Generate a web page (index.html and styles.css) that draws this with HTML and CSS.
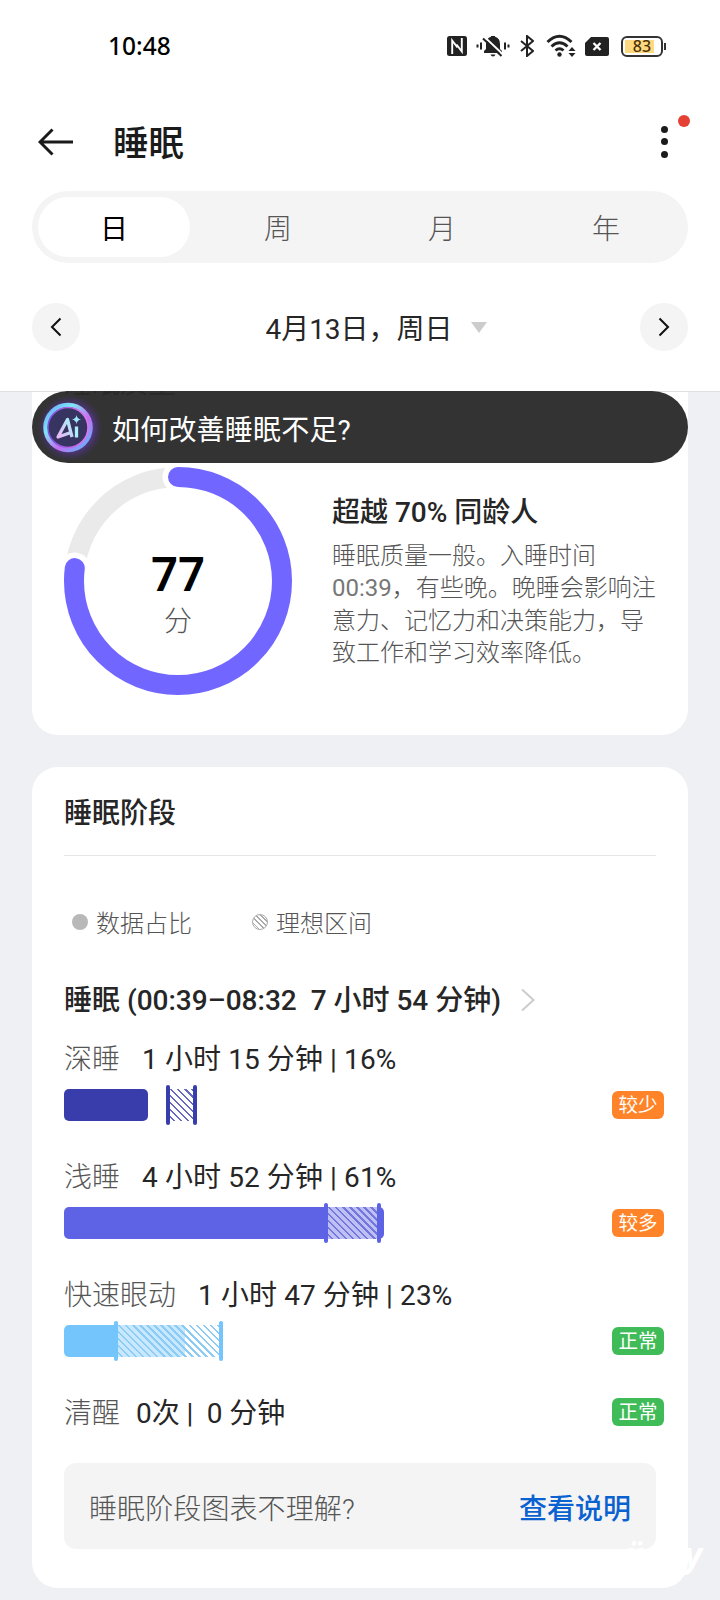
FILE: index.html
```html
<!DOCTYPE html>
<html lang="zh-CN">
<head>
<meta charset="utf-8">
<title>睡眠</title>
<link rel="stylesheet" href="styles.css">
</head>
<body>
<div class="screen">
  <header class="header">
    <div class="status">
      <span class="clock">10:48</span>
      <div class="status-icons">
        <svg class="ic-nfc" width="20" height="20" viewBox="0 0 20 20"><rect width="20" height="20" rx="2.5" fill="#222"/><path d="M5.200 18V4.500l5.300 7M14.800 2v13.500L9.500 8.500" fill="none" stroke="#fff" stroke-width="1.900"/></svg>
        <svg class="ic-bell" width="34" height="24" viewBox="0 0 34 24"><path d="M8 19v-2l2-2v-5q0-6 5-7.200V2h4v.8q5 1.200 5 7.200v5l2 2v2zM14.500 20.500h5q-.7 2-2.500 2t-2.500-2z" fill="#222"/><path d="M8.500 3l18.500 17.500" stroke="#fff" stroke-width="2"/><path d="M7 4.500l18.500 17.500" stroke="#222" stroke-width="2"/><path d="M1.500 10.500v3M5 8.500v7M29 8.500v7M32.500 10.500v3" stroke="#222" stroke-width="2"/></svg>
        <svg class="ic-bt" width="14" height="22" viewBox="0 0 14 22"><path d="M1 6l12 10-6 5V1l6 5L1 16" fill="none" stroke="#222" stroke-width="2"/></svg>
        <svg class="ic-wifi" width="30" height="24" viewBox="0 0 30 24"><path d="M1.500 8Q13.500-3.500 25.500 8M5.500 12.500Q13.500 5 21.500 12.500M9.500 16.500Q13.500 13 17.500 16.500" fill="none" stroke="#222" stroke-width="2.900"/><circle cx="13.500" cy="20.500" r="2.200" fill="#222"/><path d="M22.500 17l3.500-4 3.500 4zM22.500 19l3.500 4 3.500-4z" fill="#222"/></svg>
        <svg class="ic-sim" width="24" height="19" viewBox="0 0 24 19"><path d="M6 0h16q2 0 2 2v15q0 2-2 2H2q-2 0-2-2V6z" fill="#222"/><path d="M8.500 6l7 7M15.500 6l-7 7" stroke="#fff" stroke-width="2.300"/></svg>
        <div class="battery"><span>83</span></div>
      </div>
    </div>
    <div class="appbar">
      <svg class="back" width="36" height="28" viewBox="0 0 36 28"><path d="M14.500 1.500L2 14l12.500 12.500M2 14h33" fill="none" stroke="#1b1b1b" stroke-width="3"/></svg>
      <h1>睡眠</h1>
      <div class="more"><i></i><i></i><i></i><b></b></div>
    </div>
    <nav class="tabs">
      <span class="tab active">日</span><span class="tab">周</span><span class="tab">月</span><span class="tab">年</span>
    </nav>
    <div class="date">
      <span class="round"><svg width="12" height="20" viewBox="0 0 12 20"><path d="M10.500 1.500L2 10l8.500 8.500" fill="none" stroke="#111" stroke-width="2"/></svg></span>
      <div class="date-text"><span>4月13日，周日</span><svg width="16" height="11" viewBox="0 0 16 11"><path d="M0 0h16L8 11z" fill="#ccc"/></svg></div>
      <span class="round"><svg width="12" height="20" viewBox="0 0 12 20"><path d="M1.500 1.500L10 10l-8.500 8.500" fill="none" stroke="#111" stroke-width="2"/></svg></span>
    </div>
  </header>

  <main class="content">
    <section class="card quality">
      <div class="ai">
        <span class="under">睡眠质量</span>
        <svg class="ai-logo" width="72" height="72" viewBox="0 0 72 72">
          <defs>
            <radialGradient id="glow"><stop offset=".62" stop-color="#6a3fc0" stop-opacity=".75"/><stop offset="1" stop-color="#4a2c80" stop-opacity="0"/></radialGradient>
            <linearGradient id="ring" x1="0" y1="0" x2="1" y2="1"><stop offset="0" stop-color="#6fa0ff"/><stop offset=".3" stop-color="#7de6f5"/><stop offset=".62" stop-color="#c56df0"/><stop offset="1" stop-color="#4ec4ff"/></linearGradient>
            <linearGradient id="inner" x1="0" y1="0" x2="1" y2="0"><stop offset="0" stop-color="#7b4fe0"/><stop offset="1" stop-color="#e877ee"/></linearGradient>
            <linearGradient id="mark" x1="0" y1="1" x2="1" y2="0"><stop offset="0" stop-color="#e9b6f5"/><stop offset="1" stop-color="#a8f2f6"/></linearGradient>
          </defs>
          <circle cx="38" cy="37" r="33" fill="url(#glow)"/>
          <circle cx="36" cy="36.500" r="22.500" fill="#383461" stroke="url(#ring)" stroke-width="4.500"/>
          <circle cx="36" cy="36.500" r="20" fill="none" stroke="url(#inner)" stroke-width="1.500"/>
          <path d="M37.500 42L26 46 35.500 28.500l4.500 17.500" fill="none" stroke="url(#mark)" stroke-width="3.300" stroke-linejoin="round"/>
          <path d="M44.500 35.500v11" stroke="#a8f2f6" stroke-width="3.300"/>
          <path d="M44.500 24q.6 3.900 4.500 4.500-3.900.6-4.500 4.500-.6-3.900-4.500-4.500 3.900-.6 4.500-4.500z" fill="#9be9fa"/>
        </svg>
        <span class="ai-text">如何改善睡眠不足?</span>
      </div>
      <div class="score-row">
        <div class="ring">
          <svg width="232" height="232" viewBox="0 0 232 232">
            <circle cx="116" cy="116" r="104" fill="none" stroke="#eaeaea" stroke-width="20"/>
            <g fill="none" stroke-linecap="round" transform="rotate(-90 116 116)">
              <circle cx="116" cy="116" r="104" stroke="#fff" stroke-width="31" pathLength="100" stroke-dasharray="77 100"/>
              <circle cx="116" cy="116" r="104" stroke="#7166ff" stroke-width="20" pathLength="100" stroke-dasharray="77 100"/>
            </g>
          </svg>
          <div class="score"><strong>77</strong><span>分</span></div>
        </div>
        <div class="advice">
          <h2>超越 70% 同龄人</h2>
          <p>睡眠质量一般。入睡时间<br><span class="num">00:39</span>，有些晚。晚睡会影响注<br>意力、记忆力和决策能力，导<br>致工作和学习效率降低。</p>
        </div>
      </div>
    </section>

    <section class="card stages">
      <h2 class="stages-title">睡眠阶段</h2>
      <div class="legend">
        <span class="key"><i class="dot"></i>数据占比</span>
        <span class="key"><i class="dot striped"></i>理想区间</span>
      </div>
      <div class="total"><span>睡眠 (00:39–08:32  7 小时 54 分钟)</span><svg width="14" height="24" viewBox="0 0 14 24"><path d="M1 1.500L12.500 12 1 22.500" fill="none" stroke="#ccc" stroke-width="2"/></svg></div>

      <div class="stage deep">
        <div class="line"><em>深睡</em><span>1 小时 15 分钟 | 16%</span></div>
        <div class="bar-row">
          <div class="bar"><i class="fill" style="width:84px"></i><i class="range" style="left:102px;width:31px"></i></div>
          <b class="badge low">较少</b>
        </div>
      </div>
      <div class="stage light">
        <div class="line"><em>浅睡</em><span>4 小时 52 分钟 | 61%</span></div>
        <div class="bar-row">
          <div class="bar"><i class="fill" style="width:320px"></i><i class="range" style="left:260px;width:57px"></i></div>
          <b class="badge low">较多</b>
        </div>
      </div>
      <div class="stage rem">
        <div class="line"><em>快速眼动</em><span>1 小时 47 分钟 | 23%</span></div>
        <div class="bar-row">
          <div class="bar"><i class="fill" style="width:121px"></i><i class="range" style="left:50px;width:109px"></i></div>
          <b class="badge ok">正常</b>
        </div>
      </div>
      <div class="line awake"><em>清醒</em><span>0次 |  0 分钟</span><b class="badge ok">正常</b></div>

      <div class="notice"><span>睡眠阶段图表不理解?</span><a>查看说明</a></div>
    </section>
    <div class="watermark"><span>ü</span><span>y</span></div>
  </main>
</div>
</body>
</html>
```
FILE: styles.css
```css
* { box-sizing: border-box; }
body {
  margin: 0;
  background: #eff0f3;
  font-family: Roboto, "Noto Sans CJK SC", sans-serif;
  font-size: 28px;
  color: #262626;
}
h1, h2, p { margin: 0; }
i, em { font-style: normal; }
svg { display: block; flex: none; }
.screen { width: 720px; height: 1600px; overflow: hidden; display: flex; flex-direction: column; }

.header { height: 391px; background: #fff; flex: none; }
.status { height: 92px; padding: 0 54px 0 108px; display: flex; align-items: center; justify-content: space-between; }
.clock { margin-top: -1px; font: 500 24.500px/30px "Noto Sans", sans-serif; color: #000; }
.status-icons { display: flex; align-items: center; }
.ic-bell { margin-left: 9px; }
.ic-bt { margin-left: 10px; }
.ic-wifi { margin-left: 12px; }
.ic-sim { margin-left: 9px; }
.battery {
  position: relative;
  width: 42px; height: 21px;
  margin: 0 3px 0 12px;
  border: 2px solid #333;
  border-radius: 6px;
  background: linear-gradient(#ffd980, #ffd980) 2px 2px / 29px 13px no-repeat;
}
.battery span { display: block; text-align: center; font: 500 16px/16px "Noto Sans", sans-serif; color: #4a3208; }
.battery::after { content: ""; position: absolute; right: -5px; top: 5px; width: 2px; height: 7px; background: #333; }

.appbar { height: 99px; padding: 0 30px 0 38px; display: flex; align-items: center; }
.appbar h1 { margin: 4px 0 0 39px; font-size: 35.500px; font-weight: 500; line-height: 48px; color: #1b1b1b; }
.more { position: relative; margin-left: auto; width: 52px; height: 32px; display: flex; flex-direction: column; align-items: center; justify-content: space-between; }
.more i { width: 7px; height: 7px; border-radius: 50%; background: #1b1b1b; }
.more b { position: absolute; right: 0; top: -11px; width: 12px; height: 12px; border-radius: 50%; background: #e44034; }

.tabs { height: 72px; margin: 0 32px; padding: 6px; border-radius: 36px; background: #f4f4f4; display: flex; justify-content: space-between; gap: 12px; }
.tab { width: 152px; height: 60px; padding-top: 3px; border-radius: 30px; text-align: center; line-height: 60px; font-weight: 300; color: #555; }
.tab.active { background: #fff; color: #000; font-weight: 400; }
.date { height: 128px; padding: 0 32px; display: flex; align-items: center; justify-content: space-between; }
.date-text { display: flex; align-items: center; gap: 18px; margin-left: 32px; }
.round { width: 48px; height: 48px; border-radius: 50%; background: #f4f4f4; display: flex; align-items: center; justify-content: center; }

.content { position: relative; flex: 1; padding: 0 32px; border-top: 1px solid #dedfe0; }
.card { background: #fff; border-radius: 26px; padding: 0 32px; }
.quality { display: flow-root; height: 343px; margin: 0 0 32px; padding: 0; border-radius: 0 0 26px 26px; }
.ai { position: relative; height: 72px; margin-top: -1px; border-radius: 36px; background: #333; overflow: hidden; display: flex; align-items: center; color: #fff; }
.ai-text { margin: 2px 0 0 8px; letter-spacing: .2px; }
.under { position: absolute; left: 32px; top: -21px; line-height: 28px; color: #292929; }
.score-row { display: flex; padding: 2px 0 0 30px; }
.ring { position: relative; width: 232px; height: 232px; }
.score { position: absolute; inset: 0; display: flex; flex-direction: column; align-items: center; }
.score strong { margin-top: 86px; font: 600 47px/44px "Noto Sans", sans-serif; color: #000; }
.score span { margin-top: 12px; font-weight: 300; line-height: 30px; color: #555; }
.advice { padding: 28px 0 0 38px; }
.advice h2 { font-size: 28px; line-height: 40px; font-weight: 500; }
.advice p { margin-top: 7px; font-size: 24px; line-height: 32.300px; font-weight: 300; color: #555; white-space: nowrap; }
.advice .num { font-weight: 400; color: #777; }

.stages { height: 821px; }
.stages-title { height: 89px; padding-top: 27px; border-bottom: 1px solid #e6e6e6; font-size: 28px; line-height: 40px; font-weight: 500; }
.legend { display: flex; gap: 60px; padding: 51px 0 0 8px; font-size: 24px; line-height: 34px; font-weight: 300; color: #555; }
.key { display: flex; align-items: center; gap: 8px; }
.dot { width: 16px; height: 16px; margin-top: -4px; border-radius: 50%; background: #b8b8b8; }
.striped { border: 1px solid #aaa; background: repeating-linear-gradient(45deg, #aaa 0 1.300px, #fff 1.300px 3.600px); }
.total { display: flex; align-items: center; gap: 20px; margin-top: 40px; line-height: 40px; font-weight: 500; white-space: pre; }
.total svg { margin-top: -3px; }
.stage { height: 118px; }
.deep { margin-top: 19px; }
.line { display: flex; line-height: 40px; white-space: pre; }
.line em { font-weight: 300; color: #555; }
.line span { margin-left: 22px; letter-spacing: .1px; }
.bar-row { display: flex; align-items: center; justify-content: space-between; height: 32px; margin: 9px -8px 0 0; }
.bar { position: relative; flex: 1; height: 32px; }
.fill { display: block; height: 32px; border-radius: 5px; background: var(--c); }
.range {
  position: absolute; top: 0; height: 32px;
  background: repeating-linear-gradient(45deg, var(--h) 0 1.800px, transparent 1.800px 5px), rgba(255, 255, 255, .6);
}
.range::before, .range::after { content: ""; position: absolute; top: -4px; width: 4px; height: 40px; border-radius: 2px; background: var(--c); }
.range::before { left: 0; }
.range::after { right: 0; }
.deep { --c: #393dab; --h: #6669bf; }
.light { --c: #5e63e6; --h: #7377dc; }
.rem { --c: #74c5fc; --h: #8ccbf4; }
.badge { width: 52px; height: 28px; padding-top: 1px; border-radius: 6px; font-size: 19.500px; line-height: 28px; font-weight: 400; text-align: center; color: #fff; }
.low { background: #ff8429; }
.ok { background: #3fbb57; }
.awake { align-items: center; }
.awake span { margin-left: 16px; letter-spacing: -.1px; }
.awake .badge { margin: -4px -8px 0 auto; }
.notice { height: 86px; margin-top: 29px; padding: 1px 25px 0 25px; border-radius: 12px; background: #f4f4f4; display: flex; align-items: center; justify-content: space-between; }
.notice span { font-weight: 300; color: #555; letter-spacing: .1px; }
.notice a { font-weight: 500; color: #0a62d0; }
.watermark { position: absolute; left: 624px; top: 1142px; display: flex; gap: 40px; font: italic 700 34px/40px "Open Sans", sans-serif; color: #fff; }
```
